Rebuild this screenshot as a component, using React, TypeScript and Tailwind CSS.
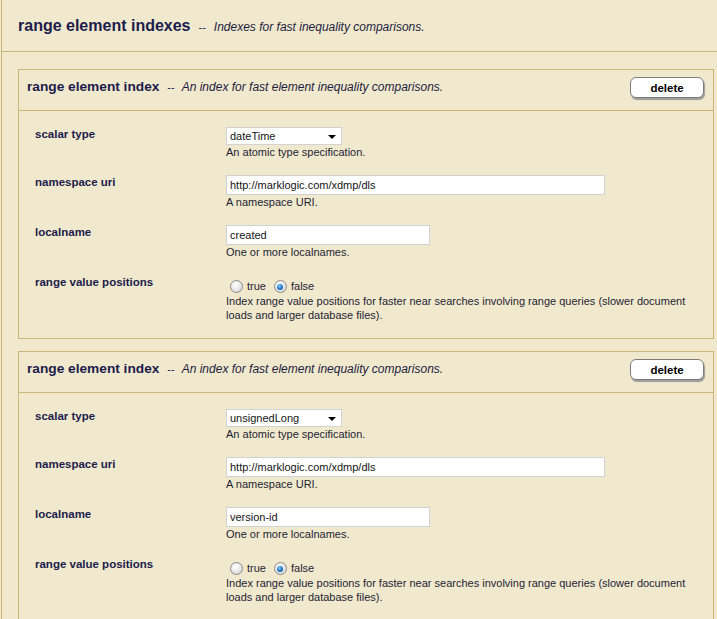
import React from "react";

const BORDER = "border-[#CBB77C]";

function Radio({ checked }: { checked?: boolean }) {
  return (
    <span className="relative inline-block w-[13px] h-[13px] rounded-full border border-[#8a8a8a] bg-[radial-gradient(circle_at_40%_35%,#ffffff_0%,#ececec_45%,#c8c8c8_100%)]">
      {checked && (
        <span className="absolute left-[2.5px] top-[2.5px] w-[6px] h-[6px] rounded-full bg-[radial-gradient(circle_at_40%_35%,#8fd0ff_0%,#2a7fd0_45%,#0d3f7a_100%)]" />
      )}
    </span>
  );
}

function Row({ label, children }: { label: string; children: React.ReactNode }) {
  return (
    <div className="flex">
      <div className="w-[191px] shrink-0 text-[11.5px] font-bold leading-[14px] text-[#1c1c4c]">{label}</div>
      <div className="flex flex-col">{children}</div>
    </div>
  );
}

function Desc({ children }: { children: React.ReactNode }) {
  return <div className="text-[11px] leading-[14px] text-[#1e1e34] whitespace-nowrap">{children}</div>;
}

function Panel({ scalar, localname }: { scalar: string; localname: string }) {
  return (
    <div className={`w-[696px] border ${BORDER}`}>
      <div className={`h-[41px] border-b ${BORDER} flex justify-between`}>
        <div className="pl-[8px] pt-[8px] flex items-baseline">
          <span className="text-[13.7px] font-bold leading-[16px] text-[#1c1c4c]">range element index</span>
          <span className="ml-[8px] text-[11px] text-[#1c1c4c]">--</span>
          <span className="ml-[7px] text-[12px] italic text-[#1c1c40]">
            An index for fast element inequality comparisons.
          </span>
        </div>
        <button className="mt-[7px] mr-[9px] w-[74px] h-[21px] rounded-[6px] border border-[#7c7c7c] bg-white shadow-[1px_2px_1px_#9c9c9c] text-[11.5px] font-bold text-black leading-[18px]">
          delete
        </button>
      </div>
      <div className="pl-[16px] pt-[16px] pb-[16px] flex flex-col gap-[16px]">
        <Row label="scalar type">
          <div className="w-[116px] h-[18px] bg-white border border-[#d2d2d2] flex items-center justify-between pl-[3px] pr-[5px] text-[11px] text-[#151515]">
            <span>{scalar}</span>
            <span className="w-0 h-0 border-l-[4px] border-r-[4px] border-t-[4px] border-l-transparent border-r-transparent border-t-black mt-[2px]" />
          </div>
          <Desc>An atomic type specification.</Desc>
        </Row>
        <Row label="namespace uri">
          <div className="w-[379px] h-[20px] bg-white border border-[#d2d2d2] flex items-center pl-[3px] text-[11px] text-[#151515]">
            http://marklogic.com/xdmp/dls
          </div>
          <Desc>A namespace URI.</Desc>
        </Row>
        <Row label="localname">
          <div className="w-[204px] h-[20px] bg-white border border-[#d2d2d2] flex items-center pl-[3px] text-[11px] text-[#151515]">
            {localname}
          </div>
          <Desc>One or more localnames.</Desc>
        </Row>
        <Row label="range value positions">
          <div className="h-[19px] pt-[4px] pl-[4px] flex items-center text-[11px] text-[#1e1e34]">
            <Radio />
            <span className="ml-[4px]">true</span>
            <span className="ml-[8px] flex items-center">
              <Radio checked />
            </span>
            <span className="ml-[4px]">false</span>
          </div>
          <Desc>
            Index range value positions for faster near searches involving range queries (slower document
            <br />
            loads and larger database files).
          </Desc>
        </Row>
      </div>
    </div>
  );
}

export default function App() {
  return (
    <div className="w-[717px] h-[619px] overflow-hidden bg-[#F1E9CD] font-['Liberation_Sans',Arial,sans-serif]">
      <div className={`ml-[1px] w-[760px] min-h-[619px] border-l ${BORDER}`}>
        <div className={`h-[52px] border-b ${BORDER} pl-[16px] pt-[17px] flex items-baseline`}>
          <span className="text-[16px] font-bold leading-[18px] text-[#1c1c4c]">range element indexes</span>
          <span className="ml-[8px] text-[11px] text-[#1c1c4c]">--</span>
          <span className="ml-[8px] text-[12px] italic text-[#1c1c40]">Indexes for fast inequality comparisons.</span>
        </div>
        <div className="pl-[16px] pt-[17px] flex flex-col gap-[12px]">
          <Panel scalar="dateTime" localname="created" />
          <Panel scalar="unsignedLong" localname="version-id" />
        </div>
      </div>
    </div>
  );
}
